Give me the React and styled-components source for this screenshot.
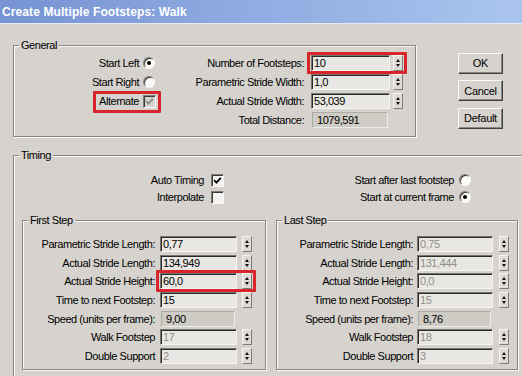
import React from "react";
import styled, { createGlobalStyle } from "styled-components";

const GlobalStyle = createGlobalStyle`
  html, body {
    margin: 0;
    padding: 0;
    background: #d6d3ce;
  }
  body {
    font-family: "Liberation Sans", Arial, sans-serif;
    font-size: 11px;
    letter-spacing: -0.45px;
    color: #000;
  }
`;

const Window = styled.div`
  width: 522px;
  height: 376px;
  overflow: hidden;
  background: #d6d3ce;
  display: flex;
  flex-direction: column;
`;

const TitleBar = styled.div`
  height: 23px;
  flex: none;
  display: flex;
  align-items: center;
  padding-left: 2px;
  background: linear-gradient(to right, #7693d3, #8eaae0 45%, #a9c5ef);
  border-bottom: 1px solid #e6eaf3;
  color: #fff;
  font-weight: bold;
  font-size: 12px;
  letter-spacing: 0.1px;
`;

const Body = styled.div`
  padding: 14px 0 0 13px;
  display: flex;
  flex-direction: column;
`;

const TopRow = styled.div`
  display: flex;
  align-items: flex-start;
`;

const Group = styled.fieldset`
  margin: 0;
  padding: 0;
  min-width: 0;
  flex: none;
  width: ${(p) => p.$width}px;
  box-sizing: border-box;
  border: 1px solid #8a8782;
  box-shadow: 1px 1px 0 #fbfaf8, inset 1px 1px 0 #fbfaf8;
`;

const Legend = styled.legend`
  padding: 0 2px;
  margin-left: 5px;
  line-height: 14px;
  background: #d6d3ce;
`;

const GeneralInner = styled.div`
  display: flex;
  padding: 1.5px 0 6px 0;
`;

const Column = styled.div`
  width: ${(p) => p.$width}px;
  display: grid;
  grid-auto-rows: ${(p) => p.$row}px;
`;

const OptionRow = styled.div`
  display: flex;
  align-items: center;
  justify-content: flex-end;
  gap: ${(p) => p.$gap}px;
`;

const ControlCell = styled.span`
  width: 14px;
  display: flex;
  justify-content: center;
  align-items: center;
  flex: none;
`;

const Text = styled.span`
  white-space: nowrap;
  line-height: 14px;
`;

const Highlight = styled.span`
  display: inline-flex;
  align-items: center;
  gap: ${(p) => p.$gap || 0}px;
  border: 3px solid #d8252c;
  border-radius: 1px;
  padding: ${(p) => p.$pad};
  margin: ${(p) => p.$margin};
`;

const Row = styled.div`
  display: flex;
  align-items: center;
  height: ${(p) => p.$h}px;
`;

const Label = styled.span`
  width: ${(p) => p.$w}px;
  flex: none;
  text-align: right;
  white-space: nowrap;
  line-height: 14px;
`;

const Field = styled.div`
  width: ${(p) => p.$w}px;
  height: 16px;
  margin-left: ${(p) => p.$ml}px;
  flex: none;
  box-sizing: border-box;
  background: #e9e7e3;
  border-style: solid;
  border-width: 1px;
  border-color: #77756f #f6f5f2 #f6f5f2 #77756f;
  box-shadow: inset 1px 1px 0 #2b2b2b;
  padding-left: 2px;
  line-height: 14px;
  white-space: nowrap;
  color: ${(p) => (p.$disabled ? "#8f8d88" : "#000")};
`;

const Readout = styled.div`
  width: ${(p) => p.$w}px;
  height: 16px;
  margin-left: ${(p) => p.$ml}px;
  flex: none;
  box-sizing: border-box;
  background: #cfccc6;
  border-style: solid;
  border-width: 1px;
  border-color: #aeaba5 #ecebe7 #ecebe7 #aeaba5;
  padding-left: 4px;
  line-height: 14px;
  white-space: nowrap;
`;

const Spinner = styled.div`
  width: 10px;
  height: 16px;
  margin-left: ${(p) => p.$ml}px;
  flex: none;
  box-sizing: border-box;
  display: flex;
  flex-direction: column;
  align-items: center;
  justify-content: center;
  gap: 2px;
  background: #dedbd6;
  border-style: solid;
  border-width: 1px;
  border-color: #f6f5f2 #7d7b76 #7d7b76 #f6f5f2;
`;

const Arrow = styled.span`
  width: 0;
  height: 0;
  border-left: 2.5px solid transparent;
  border-right: 2.5px solid transparent;
  ${(p) =>
    p.$down ? "border-top: 3px solid #111;" : "border-bottom: 3px solid #111;"}
`;

const CheckBox = styled.span`
  width: 13px;
  height: 13px;
  flex: none;
  box-sizing: border-box;
  display: flex;
  align-items: center;
  justify-content: center;
  border-style: solid;
  border-width: 1px;
  border-color: #7d7b76 #fbfaf8 #fbfaf8 #7d7b76;
  box-shadow: inset 1px 1px 0 #3a3a3a;
  background: ${(p) => (p.$disabled ? "#d6d3ce" : "#f4f3f1")};
`;

const Radio = styled.span`
  width: 12px;
  height: 12px;
  flex: none;
  box-sizing: border-box;
  border-radius: 50%;
  border-style: solid;
  border-width: 1px;
  border-color: #7d7b76 #fbfaf8 #fbfaf8 #7d7b76;
  box-shadow: inset 1px 1px 0 #3a3a3a;
  background: #fbfaf8;
  display: flex;
  align-items: center;
  justify-content: center;

  &::after {
    content: "";
    width: 4px;
    height: 4px;
    border-radius: 50%;
    background: ${(p) => (p.$on ? "#000" : "transparent")};
  }
`;

const ButtonColumn = styled.div`
  margin: 14.5px 0 0 42px;
  display: flex;
  flex-direction: column;
  gap: 6.5px;
`;

const Button = styled.button`
  width: 45px;
  height: 21px;
  padding: 0;
  font: inherit;
  letter-spacing: -0.3px;
  color: #000;
  background: #d6d3ce;
  border-style: solid;
  border-width: 1px;
  border-color: #fbfaf8 #3f3f3f #3f3f3f #fbfaf8;
  box-shadow: inset -1px -1px 0 #8a8782;
`;

const TimingGroup = styled(Group)`
  margin-top: 11.5px;
`;

const TimingInner = styled.div`
  padding: 9.5px 0 20px 0;
`;

const OptionsGrid = styled.div`
  display: grid;
  grid-template-columns: 210px 248px;
  grid-auto-rows: 17px;
`;

const StepsRow = styled.div`
  display: flex;
  gap: 10px;
  margin: 7.5px 0 0 8px;
`;

const StepInner = styled.div`
  display: grid;
  grid-auto-rows: 18.7px;
  padding: 7.6px 0 4px 0;
`;

const Check = ({ color }) => (
  <svg width="9" height="9" viewBox="0 0 9 9">
    <polyline
      points="1.2,4.2 3.4,6.6 7.8,1.8"
      fill="none"
      stroke={color}
      strokeWidth="1.8"
    />
  </svg>
);

const Spin = ({ ml }) => (
  <Spinner $ml={ml}>
    <Arrow />
    <Arrow $down />
  </Spinner>
);

const general = [
  { label: "Number of Footsteps:", value: "10", mark: true },
  { label: "Parametric Stride Width:", value: "1,0" },
  { label: "Actual Stride Width:", value: "53,039" },
  { label: "Total Distance:", value: "1079,591", readout: true },
];

const firstStep = [
  { label: "Parametric Stride Length:", value: "0,77" },
  { label: "Actual Stride Length:", value: "134,949" },
  { label: "Actual Stride Height:", value: "60,0", mark: true },
  { label: "Time to next Footstep:", value: "15" },
  { label: "Speed (units per frame):", value: "9,00", readout: true },
  { label: "Walk Footstep", value: "17", disabled: true },
  { label: "Double Support", value: "2", disabled: true },
];

const lastStep = [
  { label: "Parametric Stride Length:", value: "0,75", disabled: true },
  { label: "Actual Stride Length:", value: "131,444", disabled: true },
  { label: "Actual Stride Height:", value: "0,0", disabled: true },
  { label: "Time to next Footstep:", value: "15", disabled: true },
  { label: "Speed (units per frame):", value: "8,76", readout: true },
  { label: "Walk Footstep", value: "18", disabled: true },
  { label: "Double Support", value: "3", disabled: true },
];

function SpinRow({ item, h, dims }) {
  const { labelW, fieldW, gap1, gap2 } = dims;
  const control = item.readout ? (
    <Readout $w={fieldW - 3} $ml={gap1 + 1}>
      {item.value}
    </Readout>
  ) : (
    <>
      <Field $w={fieldW} $ml={item.mark ? 0 : gap1} $disabled={item.disabled}>
        {item.value}
      </Field>
      <Spin ml={gap2} />
    </>
  );
  return (
    <Row $h={h}>
      <Label $w={labelW}>{item.label}</Label>
      {item.mark ? (
        <Highlight $pad="0 1px" $margin={`-3px -4px -3px ${gap1 - 4}px`}>
          {control}
        </Highlight>
      ) : (
        control
      )}
    </Row>
  );
}

function App() {
  return (
    <Window>
      <GlobalStyle />
      <TitleBar>Create Multiple Footsteps: Walk</TitleBar>
      <Body>
        <TopRow>
          <Group $width={403}>
            <Legend>General</Legend>
            <GeneralInner>
              <Column $width={142} $row={19}>
                <OptionRow $gap={3}>
                  <Text>Start Left</Text>
                  <ControlCell>
                    <Radio $on />
                  </ControlCell>
                </OptionRow>
                <OptionRow $gap={3}>
                  <Text>Start Right</Text>
                  <ControlCell>
                    <Radio />
                  </ControlCell>
                </OptionRow>
                <OptionRow $gap={0}>
                  <Highlight
                    $gap={3}
                    $pad="0 2px 2px 3px"
                    $margin="0 -5px -2px 0"
                  >
                    <Text>Alternate</Text>
                    <ControlCell>
                      <CheckBox $disabled>
                        <Check color="#8f8d88" />
                      </CheckBox>
                    </ControlCell>
                  </Highlight>
                </OptionRow>
              </Column>
              <Column $width={258} $row={19}>
                {general.map((item) => (
                  <SpinRow
                    key={item.label}
                    item={item}
                    h={19}
                    dims={{ labelW: 148, fieldW: 79, gap1: 7, gap2: 3 }}
                  />
                ))}
              </Column>
            </GeneralInner>
          </Group>
          <ButtonColumn>
            <Button>OK</Button>
            <Button>Cancel</Button>
            <Button>Default</Button>
          </ButtonColumn>
        </TopRow>

        <TimingGroup $width={516}>
          <Legend>Timing</Legend>
          <TimingInner>
            <OptionsGrid>
              <OptionRow $gap={6}>
                <Text>Auto Timing</Text>
                <ControlCell>
                  <CheckBox>
                    <Check color="#000" />
                  </CheckBox>
                </ControlCell>
              </OptionRow>
              <OptionRow $gap={4}>
                <Text>Start after last footstep</Text>
                <ControlCell>
                  <Radio />
                </ControlCell>
              </OptionRow>
              <OptionRow $gap={6}>
                <Text>Interpolate</Text>
                <ControlCell>
                  <CheckBox />
                </ControlCell>
              </OptionRow>
              <OptionRow $gap={4}>
                <Text>Start at current frame</Text>
                <ControlCell>
                  <Radio $on />
                </ControlCell>
              </OptionRow>
            </OptionsGrid>

            <StepsRow>
              <Group $width={244}>
                <Legend>First Step</Legend>
                <StepInner>
                  {firstStep.map((item) => (
                    <SpinRow
                      key={item.label}
                      item={item}
                      h={18.7}
                      dims={{ labelW: 132, fieldW: 77, gap1: 5, gap2: 5 }}
                    />
                  ))}
                </StepInner>
              </Group>
              <Group $width={242}>
                <Legend>Last Step</Legend>
                <StepInner>
                  {lastStep.map((item) => (
                    <SpinRow
                      key={item.label}
                      item={item}
                      h={18.7}
                      dims={{ labelW: 136, fieldW: 76, gap1: 4, gap2: 6 }}
                    />
                  ))}
                </StepInner>
              </Group>
            </StepsRow>
          </TimingInner>
        </TimingGroup>
      </Body>
    </Window>
  );
}

export default App;
